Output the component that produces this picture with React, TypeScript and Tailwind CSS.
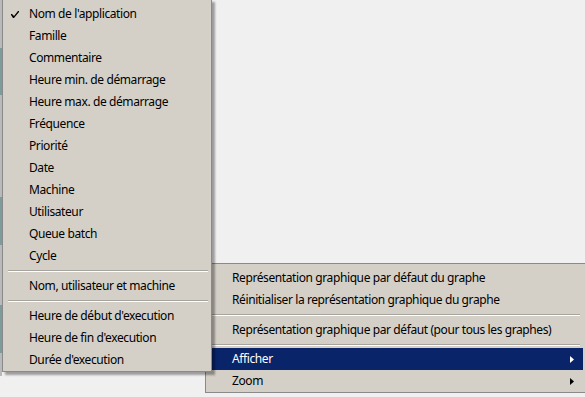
import React from "react";

type Entry = { label: string; checked?: boolean; submenu?: boolean; active?: boolean } | { sep: number };

const leftItems: Entry[] = [
  { label: "Nom de l'application", checked: true },
  { label: "Famille" },
  { label: "Commentaire" },
  { label: "Heure min. de démarrage" },
  { label: "Heure max. de démarrage" },
  { label: "Fréquence" },
  { label: "Priorité" },
  { label: "Date" },
  { label: "Machine" },
  { label: "Utilisateur" },
  { label: "Queue batch" },
  { label: "Cycle" },
  { sep: 8 },
  { label: "Nom, utilisateur et machine" },
  { sep: 8 },
  { label: "Heure de début d'execution" },
  { label: "Heure de fin d'execution" },
  { label: "Durée d'execution" },
];

const rightItems: Entry[] = [
  { label: "Représentation graphique par défaut du graphe" },
  { label: "Réinitialiser la représentation graphique du graphe" },
  { sep: 8 },
  { label: "Représentation graphique par défaut (pour tous les graphes)" },
  { sep: 7 },
  { label: "Afficher", submenu: true, active: true },
  { label: "Zoom", submenu: true },
];

function Check() {
  return (
    <svg width="8" height="7" viewBox="0 0 8 7" className="absolute left-[6px] top-[8px]">
      <path d="M0 3 L1 3 L3 5 L7 0 L8 0 L8 1 L3 7 L2 7 L0 4 Z" fill="#000" />
    </svg>
  );
}

function Arrow({ white }: { white?: boolean }) {
  return (
    <svg width="4" height="7" viewBox="0 0 4 7" className="absolute right-[9px] top-[8px]">
      <path d="M0 0 L4 3.5 L0 7 Z" fill={white ? "#fff" : "#000"} />
    </svg>
  );
}

function Menu({ items, sepInset }: { items: Entry[]; sepInset: string }) {
  return (
    <>
      {items.map((it, i) =>
        "sep" in it ? (
          <div
            key={i}
            className={`flex items-center ${sepInset} ${it.sep === 8 ? "h-[8px]" : "h-[7px]"}`}
          >
            <div className="w-full border-t border-[#a6a49f] border-b border-b-white" />
          </div>
        ) : (
          <div
            key={i}
            className={`relative h-[22px] flex items-center pl-[24px] whitespace-nowrap ${
              it.active ? "bg-[#0a246a] text-white" : "text-black"
            }`}
          >
            {it.checked && <Check />}
            <span className="leading-none">{it.label}</span>
            {it.submenu && <Arrow white={it.active} />}
          </div>
        )
      )}
    </>
  );
}

export default function App() {
  return (
    <div
      className="relative w-[585px] h-[397px] overflow-hidden bg-[#f0f0f0] text-[12px] tracking-[-0.4px]"
      style={{ fontFamily: '"Noto Sans", "Open Sans", sans-serif' }}
    >
      {/* window edge peeking under the menu */}
      <div className="absolute left-0 top-0 w-[2px] h-[376px] flex flex-col">
        <div className="h-[48px] bg-[#b9b9b9]" />
        <div className="h-[47px] bg-[#7c9c9c]" />
        <div className="h-[102px] bg-[#b9b9b9]" />
        <div className="h-[48px] bg-[#7c9c9c]" />
        <div className="h-[60px] bg-[#b9b9b9]" />
        <div className="h-[48px] bg-[#7c9c9c]" />
        <div className="h-[23px] bg-[#b9b9b9]" />
      </div>

      {/* submenu (behind) */}
      <div className="absolute left-[205px] top-[263px] w-[381px] bg-[#d4d0c8] border border-[#8a8a8a] pt-[3px] px-[2px]">
        <Menu items={rightItems} sepInset="pl-[3px] pr-[3px]" />
      </div>

      {/* column menu (front) */}
      <div className="absolute left-[2px] top-[-1px] w-[210px] bg-[#d4d0c8] border border-[#8a8a8a] pt-[3px] px-[2px] shadow-[3px_3px_2px_rgba(0,0,0,0.35)]">
        <Menu items={leftItems} sepInset="pl-[3px] pr-[1px]" />
      </div>
    </div>
  );
}
